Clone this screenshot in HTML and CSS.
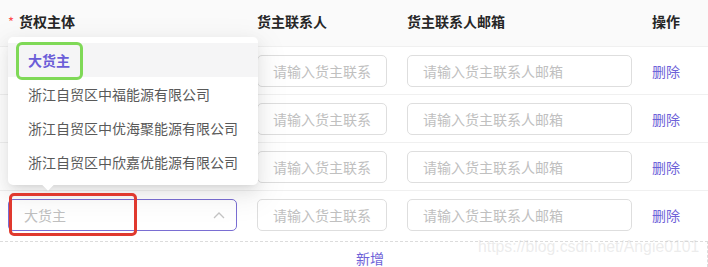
FILE: index.html
```html
<!DOCTYPE html>
<html lang="zh">
<head>
<meta charset="utf-8">
<link rel="stylesheet" href="styles.css">
</head>
<body>
<div class="page">
  <div class="table">
    <div class="row head">
      <div class="cell"><span class="req">*</span>货权主体</div>
      <div class="cell">货主联系人</div>
      <div class="cell">货主联系人邮箱</div>
      <div class="cell">操作</div>
    </div>
    <div class="row">
      <div class="cell"></div>
      <div class="cell"><div class="input">请输入货主联系</div></div>
      <div class="cell"><div class="input">请输入货主联系人邮箱</div></div>
      <div class="cell"><span class="link">删除</span></div>
    </div>
    <div class="row">
      <div class="cell"></div>
      <div class="cell"><div class="input">请输入货主联系</div></div>
      <div class="cell"><div class="input">请输入货主联系人邮箱</div></div>
      <div class="cell"><span class="link">删除</span></div>
    </div>
    <div class="row">
      <div class="cell"></div>
      <div class="cell"><div class="input">请输入货主联系</div></div>
      <div class="cell"><div class="input">请输入货主联系人邮箱</div></div>
      <div class="cell"><span class="link">删除</span></div>
    </div>
    <div class="row last">
      <div class="cell">
        <div class="input select">
          <span>大货主</span>
          <svg class="chev" width="12" height="8" viewBox="0 0 12 8"><polyline points="1,7 6,2 11,7" fill="none" stroke="#c4c4c4" stroke-width="1.3"/></svg>
        </div>
      </div>
      <div class="cell"><div class="input">请输入货主联系</div></div>
      <div class="cell"><div class="input">请输入货主联系人邮箱</div></div>
      <div class="cell"><span class="link">删除</span></div>
    </div>
  </div>
  <div class="add"><span class="link">新增</span></div>

  <div class="dropdown">
    <div class="opt active">大货主</div>
    <div class="opt">浙江自贸区中福能源有限公司</div>
    <div class="opt">浙江自贸区中优海聚能源有限公司</div>
    <div class="opt">浙江自贸区中欣嘉优能源有限公司</div>
    <div class="arrow"></div>
  </div>
  <div class="mark green"></div>
  <div class="mark red"></div>
  <div class="watermark">https://blog.csdn.net/Angie0101</div>
</div>
</body>
</html>
```
FILE: styles.css
```css
* { box-sizing: border-box; }
html, body { margin: 0; padding: 0; background: #fff; }
body {
  font-family: "Noto Sans CJK SC", "Noto Sans", sans-serif;
  font-size: 14px;
  color: #595959;
  width: 708px;
  height: 267px;
  overflow: hidden;
}
.page { position: relative; width: 708px; height: 267px; }
.row {
  display: grid;
  grid-template-columns: 249px 150px 245px 64px;
  height: 48px;
  border-bottom: 1px solid #f0f0f0;
  align-items: center;
}
.row.last { border-bottom: none; }
.row.head {
  height: 47px;
  background: #fafafa;
  align-items: start;
  padding-top: 10px;
  color: #262626;
  font-weight: 600;
  line-height: 22px;
}
.cell { padding: 0 12px 0 8px; white-space: nowrap; }
.req { color: #ff4d4f; font-weight: 400; margin-right: 5px; font-size: 13px; }
.input {
  height: 32px;
  border: 1px solid #dedede;
  border-radius: 5px;
  padding: 0 15px;
  line-height: 30px;
  color: #c0c0c0;
  overflow: hidden;
}
.select {
  border-color: #7a6ed3;
  display: flex;
  align-items: center;
  justify-content: space-between;
  padding-right: 11px;
}
.chev { display: block; }
.link { color: #6e62d8; }
.add {
  margin-top: 2px;
  height: 26px;
  border-top: 1px dashed #dcdcdc;
  border-right: 1px dashed #dcdcdc;
  padding-left: 356px;
  padding-top: 7px;
  line-height: 18px;
}
.dropdown {
  position: absolute;
  left: 8px;
  top: 37px;
  width: 250px;
  height: 148px;
  padding-top: 6px;
  background: #fff;
  border-radius: 5px;
  box-shadow: 0 3px 6px -4px rgba(0,0,0,.12), 0 6px 16px 0 rgba(0,0,0,.08), 0 9px 28px 8px rgba(0,0,0,.05);
}
.opt {
  height: 34px;
  line-height: 34px;
  padding-left: 20px;
  color: #595959;
  white-space: nowrap;
}
.opt.active { background: #f5f5f6; color: #6b5dd8; font-weight: 600; }
.arrow {
  position: absolute;
  left: 36px;
  bottom: -4px;
  width: 8px;
  height: 8px;
  background: #fff;
  transform: rotate(45deg);
  box-shadow: 3px 3px 5px -2px rgba(0,0,0,.07);
}
.mark { position: absolute; border-style: solid; }
.mark.green {
  left: 16px; top: 42px; width: 67px; height: 38px;
  border-width: 3px; border-color: #7fd957; border-radius: 6px;
}
.mark.red {
  left: 9px; top: 193px; width: 128px; height: 43px;
  border-width: 3px; border-color: #e0392e; border-radius: 5px;
}
.watermark {
  position: absolute;
  left: 478px;
  top: 238px;
  font-family: "Liberation Sans", Arial, sans-serif;
  font-size: 15.8px;
  color: rgba(200,200,200,.35);
  white-space: nowrap;
}
```
